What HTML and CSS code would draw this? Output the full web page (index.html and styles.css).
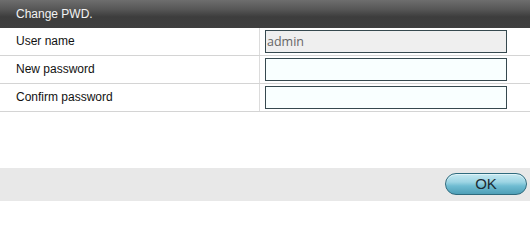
FILE: index.html
```html
<!DOCTYPE html>
<html>
<head>
<meta charset="utf-8">
<link rel="stylesheet" href="styles.css">
</head>
<body>
<div class="dialog">
  <div class="header">Change PWD.</div>
  <div class="rows">
    <div class="row">
      <div class="label">User name</div>
      <div class="field"><input class="input input-readonly" type="text" value="admin" readonly></div>
    </div>
    <div class="row">
      <div class="label">New password</div>
      <div class="field"><input class="input" type="password"></div>
    </div>
    <div class="row">
      <div class="label">Confirm password</div>
      <div class="field"><input class="input" type="password"></div>
    </div>
  </div>
  <div class="spacer"></div>
  <div class="footer">
    <button class="btn-ok">OK</button>
  </div>
</div>
</body>
</html>
```
FILE: styles.css
```css
html, body {
  margin: 0;
  padding: 0;
  background: #ffffff;
}
body {
  font-family: "Liberation Sans", Arial, sans-serif;
  font-size: 12px;
  color: #111;
}
.dialog {
  width: 530px;
  height: 201px;
  display: flex;
  flex-direction: column;
}
.header {
  height: 28px;
  line-height: 28px;
  padding-left: 16px;
  color: #f2f2f2;
  background: linear-gradient(#6e6e6e 0%, #555555 35%, #3d3d3d 60%, #3f3f3f 100%);
  box-sizing: border-box;
}
.rows {
  display: flex;
  flex-direction: column;
}
.row {
  display: flex;
  height: 28px;
  border-bottom: 1px solid #d4d4d4;
  box-sizing: border-box;
}
.label {
  width: 260px;
  padding-left: 16px;
  box-sizing: border-box;
  line-height: 27px;
  border-right: 1px solid #dcdcdc;
}
.field {
  display: flex;
  align-items: center;
  padding-left: 5px;
}
.input {
  width: 242px;
  height: 23px;
  box-sizing: border-box;
  border: 1px solid #36494f;
  border-radius: 0;
  margin: 0;
  padding: 0 1px;
  background: #f9ffff;
  font-family: "Open Sans", "Liberation Sans", sans-serif;
  font-size: 12.5px;
  color: #666666;
  outline: none;
}
.input-readonly {
  background: #efefef;
}
.spacer {
  flex: 1;
}
.footer {
  height: 33px;
  background: #e8e8e8;
  display: flex;
  justify-content: flex-end;
  align-items: flex-start;
  padding-top: 5px;
  padding-right: 3px;
  box-sizing: border-box;
}
.btn-ok {
  width: 82px;
  height: 22px;
  border: 1px solid #2f6b7e;
  border-radius: 11px;
  background: linear-gradient(#c6e9f1 0%, #9dd5e4 40%, #6fbcd2 60%, #4f9fb7 100%);
  font-family: "Liberation Sans", Arial, sans-serif;
  font-size: 15px;
  color: #1b2b33;
  padding: 0;
  line-height: 20px;
  box-shadow: inset 0 1px 0 rgba(255,255,255,0.5);
}
```
